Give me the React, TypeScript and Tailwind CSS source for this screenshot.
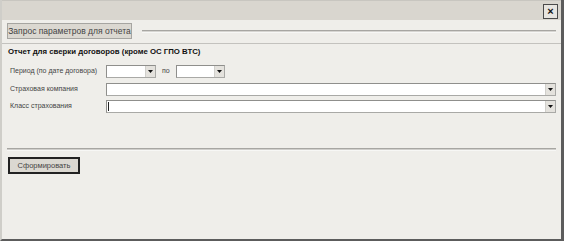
import React from "react";

const font = { fontFamily: '"Liberation Sans", Arial, sans-serif' };

function DropBtn() {
  return (
    <div className="w-[10px] h-full flex items-center justify-center bg-[#e4e2dd] border-l border-[#d0cfcb]">
      <svg width="5" height="3" viewBox="0 0 5 3">
        <path d="M0 0 H5 L2.5 3 Z" fill="#111" />
      </svg>
    </div>
  );
}

function Combo({ w, cursor }: { w: string; cursor?: boolean }) {
  return (
    <div className={`${w} h-[13px] flex bg-white border border-[#a9a9a6] border-t-[#8f8f8c] border-l-[#8f8f8c]`}>
      <div className="flex-1 flex items-center pl-[1px]">
        {cursor ? <div className="w-[1px] h-[9px] bg-[#222]" /> : null}
      </div>
      <DropBtn />
    </div>
  );
}

export default function App() {
  return (
    <div
      className="w-[564px] h-[241px] flex flex-col bg-[#efeeea] border-l-[2px] border-l-[#cfcec9] border-r-[3px] border-r-[#5c5c5c] border-b-[2px] border-b-[#5c5c5c]"
      style={font}
    >
      {/* top bar */}
      <div className="h-[20px] bg-[#d9d6cf] border-t border-[#c8c6c0] flex justify-end items-start pt-[3px] pr-[3px]">
        <div className="w-[15px] h-[15px] border border-[#4a4a4a] bg-[#e7e5e0] flex items-center justify-center text-[11px] leading-none font-bold text-[#111]">
          ×
        </div>
      </div>

      {/* tab row */}
      <div className="mt-[3px] h-[16px] flex items-center pl-[5px] pr-[5px]">
        <div className="w-[125px] h-[16px] border border-[#a6a5a1] bg-[#dbd8d1] flex items-center justify-center text-[8.5px] text-[#444]">
          Запрос параметров для отчета
        </div>
        <div className="ml-[10px] flex-1 h-[3px] border-t border-[#a7a6a2] bg-[#d6d5d1] border-b border-b-[#f7f7f5]" />
      </div>

      <div className="mt-[4px] h-[1px] bg-[#c3c2be]" />

      {/* content */}
      <div className="pl-[6px] mt-[3px] text-[7.8px] leading-[10px] font-bold text-[#111]">
        Отчет для сверки договоров (кроме ОС ГПО ВТС)
      </div>

      <div className="mt-[8px] flex items-center pl-[8px] text-[7px] text-[#444]">
        <div className="w-[96px]">Период (по дате договора)</div>
        <Combo w="w-[50px]" />
        <div className="w-[20px] pl-[6px]">по</div>
        <Combo w="w-[49px]" />
      </div>

      <div className="mt-[5px] flex items-center pl-[8px] text-[7px] text-[#444]">
        <div className="w-[96px]">Страховая компания</div>
        <Combo w="w-[450px]" />
      </div>

      <div className="mt-[4px] flex items-center pl-[8px] text-[7px] text-[#444]">
        <div className="w-[96px]">Класс страхования</div>
        <Combo w="w-[450px]" cursor />
      </div>

      <div className="mt-[35px] ml-[5px] mr-[5px] h-[3px] border-t border-[#a7a6a2] bg-[#cfcecb] border-b border-b-[#f7f7f5]" />

      <div className="mt-[6px] ml-[6px] w-[72px] h-[17px] border-[2px] border-[#222] bg-[#dbd8d1] flex items-center justify-center text-[7.5px] text-[#444]">
        Сформировать
      </div>
    </div>
  );
}
